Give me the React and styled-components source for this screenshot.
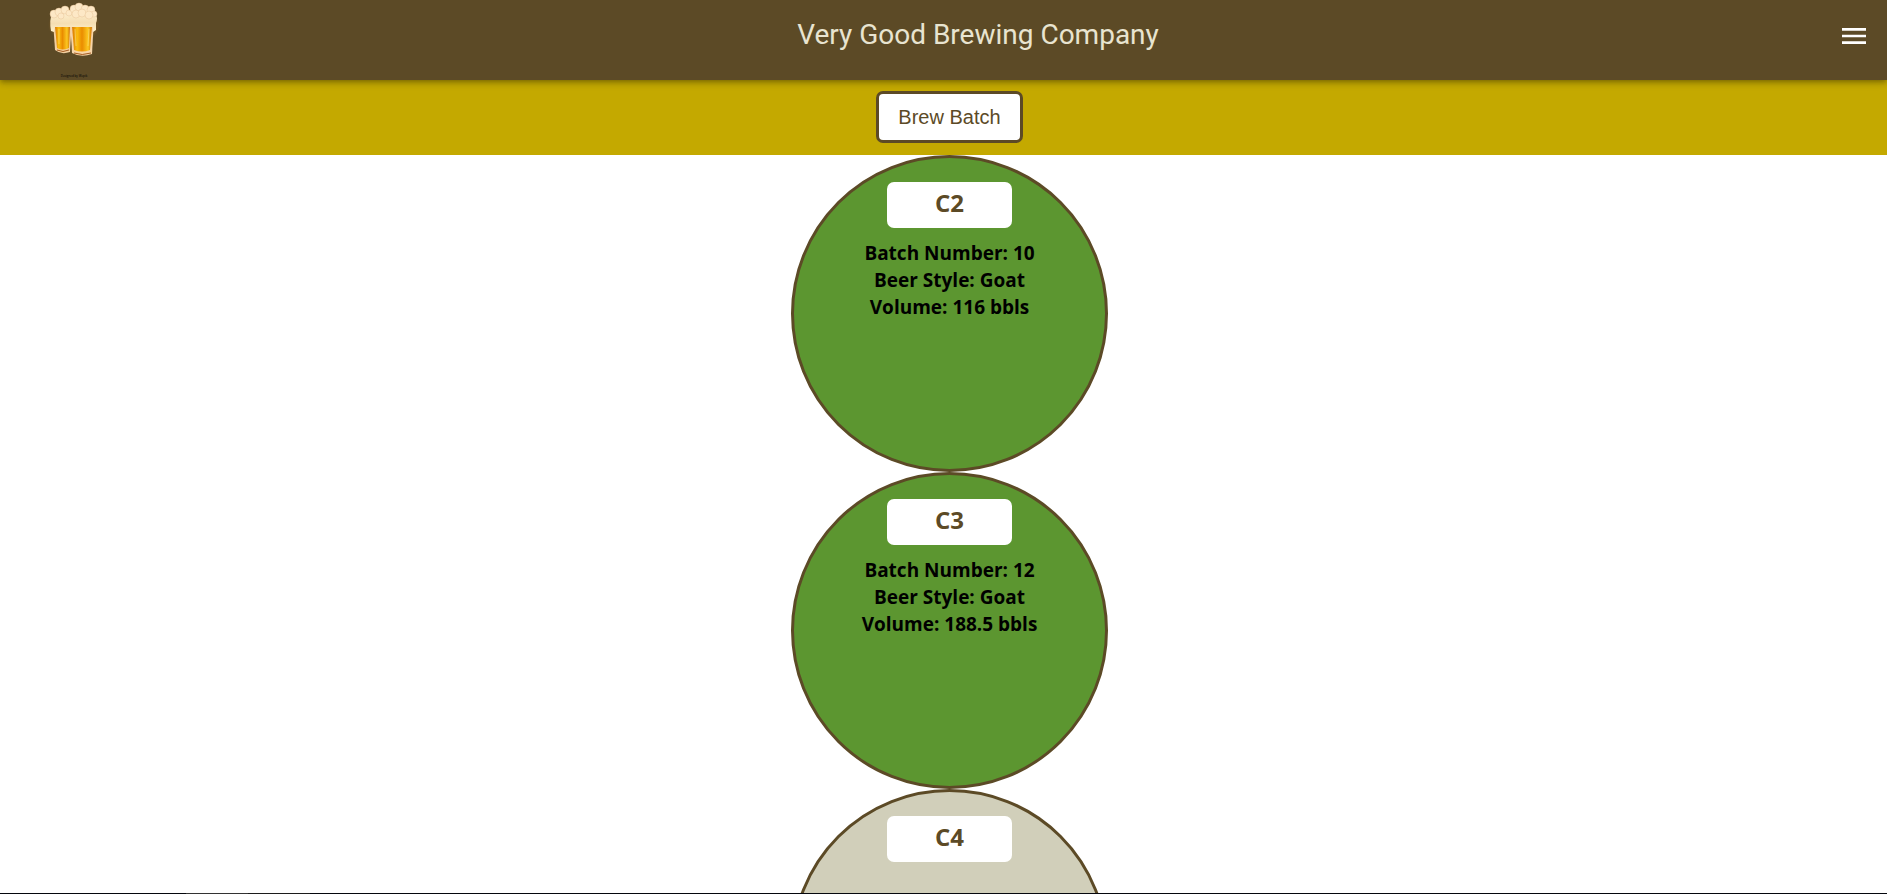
import React from "react";
import styled, { createGlobalStyle } from "styled-components";

const brown = "#5c4a26";

const GlobalStyle = createGlobalStyle`
  *, *::before, *::after { box-sizing: border-box; }
  html, body { margin: 0; height: 100%; overflow: hidden; background: #fff; }
  #root { height: 100%; }
  h1, h2, p, ul { margin: 0; padding: 0; }
`;

const Page = styled.div`
  display: flex;
  flex-direction: column;
  height: 100%;
  font-family: "Open Sans", "Noto Sans", sans-serif;
`;

const Header = styled.header`
  display: flex;
  flex: none;
  height: 80px;
  padding: 0 16px;
  background: ${brown};
  box-shadow: 0 2px 4px -1px rgba(0, 0, 0, 0.2), 0 4px 5px rgba(0, 0, 0, 0.14), 0 1px 10px rgba(0, 0, 0, 0.12);
  z-index: 1;
`;

const Logo = styled.a`
  display: flex;
  flex: none;
  flex-direction: column;
  align-items: center;
  justify-content: space-between;
  width: 116px;
  padding-bottom: 2px;
  color: #000;
  text-decoration: none;
  font-size: 3px;
  line-height: 4px;
`;

const Title = styled.h1`
  flex: 1;
  padding-right: 14px;
  text-align: center;
  color: #e8e4d0;
  font-family: Roboto, "Open Sans", sans-serif;
  font-size: 28px;
  font-weight: 400;
  line-height: 70px;
`;

const MenuButton = styled.button`
  display: flex;
  flex: none;
  align-self: flex-start;
  margin: 20px 1px 0 0;
  padding: 0;
  border: 0;
  background: none;
  color: #fff;
`;

const Toolbar = styled.div`
  display: flex;
  flex: none;
  justify-content: center;
  height: 75px;
  padding: 11px 0 12px 12px;
  background: #c4a900;
`;

const BrewButton = styled.button`
  width: 147px;
  border: 3px solid ${brown};
  border-radius: 7px;
  background: #fff;
  color: ${brown};
  font: 20px "Liberation Sans", Arial, sans-serif;
`;

const TankList = styled.ul`
  display: flex;
  flex: 1;
  flex-direction: column;
  align-items: center;
  min-height: 0;
  overflow: hidden;
  padding-left: 12px;
  list-style: none;
`;

const Tank = styled.li`
  display: flex;
  flex: none;
  flex-direction: column;
  align-items: center;
  width: 317px;
  height: 317px;
  padding-top: 24px;
  border: 3px solid ${brown};
  border-radius: 50%;
  background: ${(p) => (p.$filled ? "#5c9630" : "#d1cfba")};
`;

const TankName = styled.h2`
  width: 125px;
  height: 46px;
  margin-bottom: 12px;
  border-radius: 7px;
  background: #fff;
  color: ${brown};
  font-size: 24px;
  line-height: 42px;
  text-align: center;
`;

const Detail = styled.p`
  font-size: 19px;
  font-weight: 700;
  line-height: 27px;
`;

const Taskbar = styled.div`
  display: flex;
  flex: none;
  height: 1px;
  padding-left: 186px;
  background: #05070d;
`;

const TaskbarItem = styled.span`
  width: 62px;
  background: ${(p) => p.$color};
`;

const tanks = [
  { name: "C2", batch: 10, style: "Goat", volume: 116 },
  { name: "C3", batch: 12, style: "Goat", volume: 188.5 },
  { name: "C4" },
];

function BeerMugs() {
  return (
    <svg width="56" height="60" viewBox="0 0 56 60" aria-hidden="true">
      <defs>
        <linearGradient id="beer" x1="0" x2="1">
          <stop offset="0" stopColor="#d87500" />
          <stop offset=".25" stopColor="#fbbd10" />
          <stop offset=".5" stopColor="#ea8c00" />
          <stop offset=".8" stopColor="#fcc820" />
          <stop offset="1" stopColor="#d07000" />
        </linearGradient>
        <linearGradient id="foam" x1="0" y1="0" x2="0" y2="1">
          <stop offset="0" stopColor="#fff0d2" />
          <stop offset=".6" stopColor="#f5deb2" />
          <stop offset="1" stopColor="#fff2cc" />
        </linearGradient>
        <radialGradient id="glow">
          <stop offset=".6" stopColor="#c88020" stopOpacity=".5" />
          <stop offset="1" stopColor="#c88020" stopOpacity="0" />
        </radialGradient>
      </defs>
      <ellipse cx="28" cy="25" rx="26" ry="19" fill="url(#glow)" />
      <path d="M7 20L9 50Q15 55 24 52L26 18Z" fill="#f3cfa0" />
      <path d="M9 26H24L23 48Q16 51 11 48Z" fill="url(#beer)" />
      <path d="M24 18L26 53Q35 58 46 54L48 18Z" fill="#f6d4a8" />
      <path d="M26 26H46L44 50Q36 53 28 50Z" fill="url(#beer)" />
      <path d="M11 50Q17 53 23 50M28 53Q36 56 45 53" fill="none" stroke="#a45b22" />
      <path d="M13 29V44M29 29L30 46M43 29L42 46" stroke="#fff0b0" strokeOpacity=".4" />
      <path d="M5 31Q3 20 6 14L24 11L26 27H9L8 32Z" fill="url(#foam)" />
      <path d="M24 27Q22 14 25 9L46 9Q51 11 50 15Q52 18 50 23V30L47 32V27Z" fill="url(#foam)" />
      <g fill="#fde8c6" stroke="#e2bd90" strokeWidth=".4">
        <circle cx="8" cy="14" r="4" />
        <circle cx="13" cy="12" r="4" />
        <circle cx="19" cy="10" r="4" />
        <circle cx="23" cy="13" r="3" />
        <circle cx="15" cy="16" r="3" />
        <circle cx="28" cy="9" r="4" />
        <circle cx="33" cy="7" r="4" />
        <circle cx="39" cy="9" r="4" />
        <circle cx="45" cy="10" r="4" />
        <circle cx="48" cy="14" r="3" />
        <circle cx="30" cy="14" r="4" />
        <circle cx="36" cy="13" r="4" />
        <circle cx="43" cy="15" r="4" />
      </g>
    </svg>
  );
}

export default function App() {
  return (
    <Page>
      <GlobalStyle />
      <Header>
        <Logo href="#">
          <BeerMugs />
          <span>Designed by Wepik</span>
        </Logo>
        <Title>Very Good Brewing Company</Title>
        <MenuButton aria-label="Open menu">
          <svg width="32" height="32" viewBox="0 0 24 24" fill="currentColor" aria-hidden="true">
            <path d="M3 18h18v-2H3zm0-5h18v-2H3zm0-7v2h18V6z" />
          </svg>
        </MenuButton>
      </Header>
      <Toolbar>
        <BrewButton>Brew Batch</BrewButton>
      </Toolbar>
      <TankList>
        {tanks.map((tank) => (
          <Tank key={tank.name} $filled={Boolean(tank.batch)}>
            <TankName>{tank.name}</TankName>
            {tank.batch && (
              <>
                <Detail>Batch Number: {tank.batch}</Detail>
                <Detail>Beer Style: {tank.style}</Detail>
                <Detail>Volume: {tank.volume} bbls</Detail>
              </>
            )}
          </Tank>
        ))}
      </TankList>
      <Taskbar>
        <TaskbarItem $color="#333" />
        <TaskbarItem $color="#1c1c1c" />
      </Taskbar>
    </Page>
  );
}
